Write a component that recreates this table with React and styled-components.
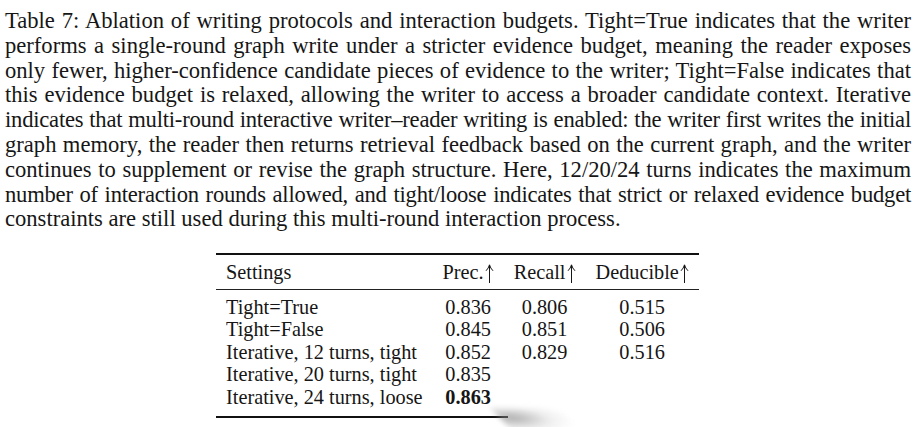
import React from 'react';
import styled, { createGlobalStyle } from 'styled-components';

const GlobalStyle = createGlobalStyle`
  html, body {
    margin: 0;
    padding: 0;
    background: #ffffff;
  }
  body {
    font-family: "Liberation Serif", "Times New Roman", serif;
    color: #161616;
  }
`;

const Page = styled.div`
  width: 922px;
  height: 427px;
  overflow: hidden;
  box-sizing: border-box;
  padding: 9px 0 0 5px;
`;

const Caption = styled.div`
  width: 906px;
  font-size: 22.6px;
  line-height: 24.8px;
`;

const CaptionLine = styled.div`
  white-space: nowrap;
  text-align: justify;
  text-align-last: ${(props) => (props.last ? 'left' : 'justify')};
  letter-spacing: ${(props) => (props.tight ? '-0.22px' : '0')};
`;

const TableWrap = styled.div`
  margin: 21px 0 0 211px;
  width: 482px;
`;

const Table = styled.table`
  width: 482px;
  border-collapse: collapse;
  border-top: 2px solid #111;
  font-size: 20.3px;
`;

const HeadCell = styled.th`
  font-weight: normal;
  text-align: ${(props) => (props.left ? 'left' : 'center')};
  padding: 0 10px;
  height: 34px;
  border-bottom: 1px solid #222;
  white-space: nowrap;
`;

const Cell = styled.td`
  text-align: ${(props) => (props.left ? 'left' : 'center')};
  font-weight: ${(props) => (props.bold ? 'bold' : 'normal')};
  padding: 0 10px;
  height: 22.6px;
  line-height: 22.6px;
  white-space: nowrap;
`;

const Spacer = styled.tr`
  height: ${(props) => props.h}px;
`;

const ArrowSvg = styled.svg`
  width: 9px;
  height: 19px;
  margin-left: 1px;
  vertical-align: -4px;
`;

const BottomRow = styled.div`
  display: flex;
  align-items: flex-start;
`;

const BottomRule = styled.div`
  width: 292px;
  height: 2px;
  background: #111;
`;

const Smudge = styled.div`
  width: 70px;
  height: 26px;
  margin: -8px 0 0 -6px;
  background: radial-gradient(ellipse at 18% 38%, rgba(120,120,120,0.6), rgba(200,200,200,0.3) 45%, rgba(255,255,255,0) 75%);
  filter: blur(3px);
  transform: skewX(40deg);
`;

function UpArrow() {
  return (
    <ArrowSvg viewBox="0 0 9 19" fill="none" stroke="#161616" strokeWidth="1">
      <path d="M4.5 1.2 V19" />
      <path d="M1 6.8 Q3.6 4.2 4.5 0.8 Q5.4 4.2 8 6.8" />
    </ArrowSvg>
  );
}

const captionLines = [
  'Table 7: Ablation of writing protocols and interaction budgets. Tight=True indicates that the writer',
  'performs a single-round graph write under a stricter evidence budget, meaning the reader exposes',
  'only fewer, higher-confidence candidate pieces of evidence to the writer; Tight=False indicates that',
  'this evidence budget is relaxed, allowing the writer to access a broader candidate context. Iterative',
  'indicates that multi-round interactive writer\u2013reader writing is enabled: the writer first writes the initial',
  'graph memory, the reader then returns retrieval feedback based on the current graph, and the writer',
  'continues to supplement or revise the graph structure. Here, 12/20/24 turns indicates the maximum',
  'number of interaction rounds allowed, and tight/loose indicates that strict or relaxed evidence budget',
  'constraints are still used during this multi-round interaction process.',
];

const tightLines = [4, 7];

const rows = [
  { name: 'Tight=True', prec: '0.836', recall: '0.806', ded: '0.515' },
  { name: 'Tight=False', prec: '0.845', recall: '0.851', ded: '0.506' },
  { name: 'Iterative, 12 turns, tight', prec: '0.852', recall: '0.829', ded: '0.516' },
  { name: 'Iterative, 20 turns, tight', prec: '0.835', recall: '', ded: '' },
  { name: 'Iterative, 24 turns, loose', prec: '0.863', recall: '', ded: '', best: true },
];

export default function App() {
  return (
    <>
      <GlobalStyle />
      <Page>
        <Caption>
          {captionLines.map((line, i) => (
            <CaptionLine
              key={i}
              tight={tightLines.includes(i)}
              last={i === captionLines.length - 1}
            >
              {line}
            </CaptionLine>
          ))}
        </Caption>
        <TableWrap>
          <Table>
            <thead>
              <tr>
                <HeadCell left>Settings</HeadCell>
                <HeadCell>Prec.<UpArrow /></HeadCell>
                <HeadCell>Recall<UpArrow /></HeadCell>
                <HeadCell>Deducible<UpArrow /></HeadCell>
              </tr>
            </thead>
            <tbody>
              <Spacer h={6} />
              {rows.map((r) => (
                <tr key={r.name}>
                  <Cell left>{r.name}</Cell>
                  <Cell bold={r.best}>{r.prec}</Cell>
                  <Cell>{r.recall}</Cell>
                  <Cell>{r.ded}</Cell>
                </tr>
              ))}
              <Spacer h={7} />
            </tbody>
          </Table>
          <BottomRow>
            <BottomRule />
            <Smudge />
          </BottomRow>
        </TableWrap>
      </Page>
    </>
  );
}
